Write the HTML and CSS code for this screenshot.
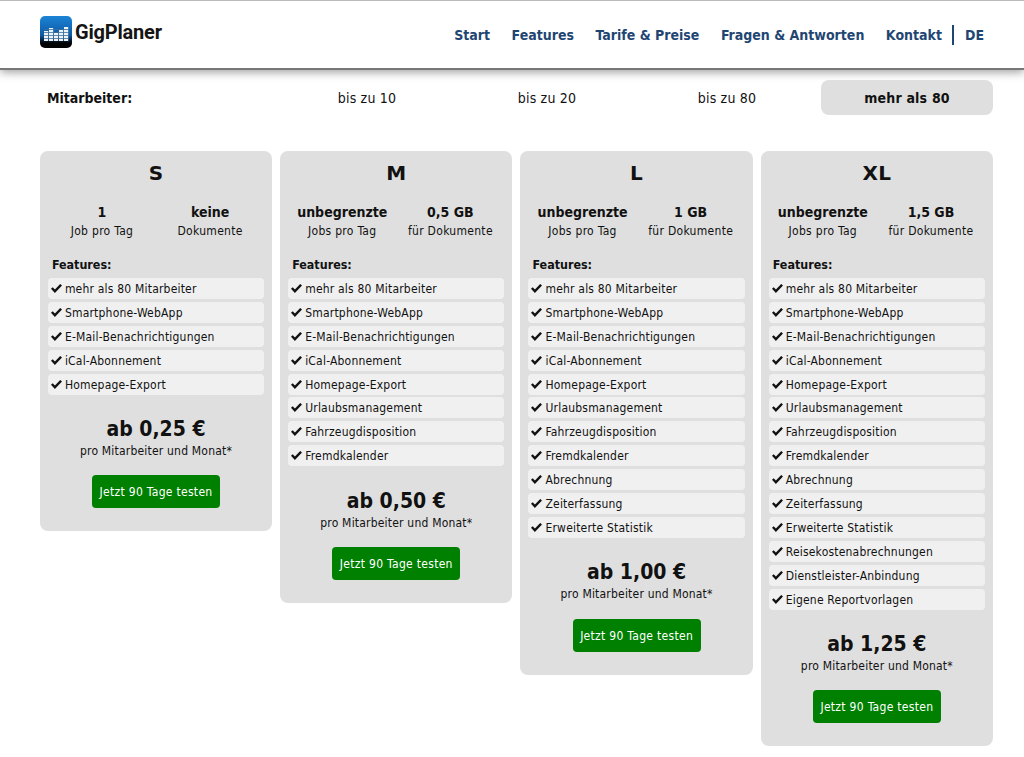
FILE: index.html
```html
<!DOCTYPE html>
<html lang="de">
<head>
<meta charset="utf-8">
<title>GigPlaner</title>
<link rel="stylesheet" href="styles.css">
</head>
<body>
<header class="topbar">
  <a class="brand" href="#">
    <svg class="brand-icon" width="32" height="32" viewBox="0 0 32 32" aria-hidden="true">
      <defs>
        <linearGradient id="lg" x1="0" y1="0" x2="0" y2="1">
          <stop offset="0" stop-color="#1c84d6"/><stop offset=".6" stop-color="#0c5aa6"/><stop offset=".78" stop-color="#03172c"/><stop offset=".86" stop-color="#000"/>
        </linearGradient>
      </defs>
      <rect width="32" height="32" rx="5" fill="url(#lg)"/>
      <g fill="#eef3f8">
        <rect x="4" y="15" width="4.2" height="10"/><rect x="9" y="12" width="4.2" height="13"/><rect x="14" y="17" width="4.2" height="8"/><rect x="19" y="14" width="4.2" height="11"/><rect x="24" y="11" width="4.2" height="14"/>
      </g>
      <g fill="#3f6f9c"><rect x="4" y="13" width="25" height=".8"/><rect x="4" y="16" width="25" height=".8"/><rect x="4" y="19" width="25" height=".8"/><rect x="4" y="22" width="25" height=".8"/></g>
    </svg>
    <span class="brand-name">GigPlaner</span>
  </a>
  <nav class="nav">
    <a href="#">Start</a>
    <a href="#">Features</a>
    <a href="#">Tarife &amp; Preise</a>
    <a href="#">Fragen &amp; Antworten</a>
    <a href="#">Kontakt</a>
    <a class="lang" href="#">DE</a>
  </nav>
</header>
<main class="content">
  <div class="tabs">
    <div class="tabs-label">Mitarbeiter:</div>
    <div class="tab">bis zu 10</div>
    <div class="tab">bis zu 20</div>
    <div class="tab">bis zu 80</div>
    <div class="tab active">mehr als 80</div>
  </div>
  <div class="plans">
    <section class="plan">
      <h2>S</h2>
      <div class="stats">
        <div><b>1</b><span>Job pro Tag</span></div>
        <div><b>keine</b><span>Dokumente</span></div>
      </div>
      <h3>Features:</h3>
      <ul>
        <li>mehr als 80 Mitarbeiter</li><li>Smartphone-WebApp</li><li>E-Mail-Benachrichtigungen</li><li>iCal-Abonnement</li><li>Homepage-Export</li>
      </ul>
      <div class="price">ab 0,25 €</div>
      <div class="per">pro Mitarbeiter und Monat*</div>
      <a class="cta" href="#">Jetzt 90 Tage testen</a>
    </section>
    <section class="plan">
      <h2>M</h2>
      <div class="stats">
        <div><b>unbegrenzte</b><span>Jobs pro Tag</span></div>
        <div><b>0,5 GB</b><span>für Dokumente</span></div>
      </div>
      <h3>Features:</h3>
      <ul>
        <li>mehr als 80 Mitarbeiter</li><li>Smartphone-WebApp</li><li>E-Mail-Benachrichtigungen</li><li>iCal-Abonnement</li><li>Homepage-Export</li><li>Urlaubsmanagement</li><li>Fahrzeugdisposition</li><li>Fremdkalender</li>
      </ul>
      <div class="price">ab 0,50 €</div>
      <div class="per">pro Mitarbeiter und Monat*</div>
      <a class="cta" href="#">Jetzt 90 Tage testen</a>
    </section>
    <section class="plan">
      <h2>L</h2>
      <div class="stats">
        <div><b>unbegrenzte</b><span>Jobs pro Tag</span></div>
        <div><b>1 GB</b><span>für Dokumente</span></div>
      </div>
      <h3>Features:</h3>
      <ul>
        <li>mehr als 80 Mitarbeiter</li><li>Smartphone-WebApp</li><li>E-Mail-Benachrichtigungen</li><li>iCal-Abonnement</li><li>Homepage-Export</li><li>Urlaubsmanagement</li><li>Fahrzeugdisposition</li><li>Fremdkalender</li><li>Abrechnung</li><li>Zeiterfassung</li><li>Erweiterte Statistik</li>
      </ul>
      <div class="price">ab 1,00 €</div>
      <div class="per">pro Mitarbeiter und Monat*</div>
      <a class="cta" href="#">Jetzt 90 Tage testen</a>
    </section>
    <section class="plan">
      <h2>XL</h2>
      <div class="stats">
        <div><b>unbegrenzte</b><span>Jobs pro Tag</span></div>
        <div><b>1,5 GB</b><span>für Dokumente</span></div>
      </div>
      <h3>Features:</h3>
      <ul>
        <li>mehr als 80 Mitarbeiter</li><li>Smartphone-WebApp</li><li>E-Mail-Benachrichtigungen</li><li>iCal-Abonnement</li><li>Homepage-Export</li><li>Urlaubsmanagement</li><li>Fahrzeugdisposition</li><li>Fremdkalender</li><li>Abrechnung</li><li>Zeiterfassung</li><li>Erweiterte Statistik</li><li>Reisekostenabrechnungen</li><li>Dienstleister-Anbindung</li><li>Eigene Reportvorlagen</li>
      </ul>
      <div class="price">ab 1,25 €</div>
      <div class="per">pro Mitarbeiter und Monat*</div>
      <a class="cta" href="#">Jetzt 90 Tage testen</a>
    </section>
  </div>
</main>
</body>
</html>
```
FILE: styles.css
```css
* { box-sizing: border-box; }
html, body { margin: 0; padding: 0; }
body {
  background: #fff;
  color: #111;
  font-family: "DejaVu Sans", Verdana, sans-serif;
  font-stretch: condensed;
  font-size: 12px;
  letter-spacing: .2px;
  overflow-x: hidden;
}
a { text-decoration: none; color: inherit; }

.topbar {
  height: 70px;
  border-top: 1px solid #bbb;
  border-bottom: 2px solid #777;
  box-shadow: 0 2px 9px rgba(0,0,0,.4);
  background: #fff;
  display: flex;
  align-items: center;
  justify-content: space-between;
  padding: 0 40px;
}
.brand { display: flex; align-items: center; gap: 3px; margin-bottom: 5px; }
.brand-icon { display: block; }
.brand-name {
  font-family: Roboto, "Liberation Sans", sans-serif;
  font-stretch: normal;
  font-weight: 700;
  font-size: 20px;
  letter-spacing: -.2px;
  color: #151515;
}
.nav { display: flex; align-items: center; margin-top: 1px; color: #1f4673; font-weight: 700; font-size: 14px; letter-spacing: 0; }
.nav a { margin-left: 21.5px; }
.nav .lang { margin-left: 10px; padding-left: 11px; border-left: 2px solid #1f4673; line-height: 20px; }

.content { padding: 10px 31px 0 39.9px; }
.tabs { display: flex; gap: 8px; height: 35px; align-items: stretch; }
.tabs-label { flex: 1; font-weight: 700; font-size: 14px; letter-spacing: 0; padding-left: 7px; display: flex; align-items: center; }
.tab { width: 172px; display: flex; align-items: center; justify-content: center; font-size: 14px; border-radius: 8px; }
.tab.active { background: #dfdfdf; font-weight: 700; }

.plans { display: flex; gap: 8px; align-items: flex-start; margin-top: 36px; }
.plan {
  flex: 1;
  background: #dfdfdf;
  border-radius: 8px;
  padding: 9px 8px 23px;
  text-align: center;
}
.plan h2 { margin: 0; font-size: 20px; line-height: 26px; font-weight: 700; font-stretch: normal; }
.stats { display: flex; margin-top: 17px; }
.stats > div { flex: 1; }
.stats b { display: block; font-size: 14px; letter-spacing: 0; line-height: 19px; }
.stats span { display: block; line-height: 18px; letter-spacing: .3px; }
.plan h3 { margin: 16px 0 0; padding-left: 4px; text-align: left; font-size: 12.4px; letter-spacing: 0; line-height: 18px; font-weight: 700; }
.plan ul { list-style: none; margin: 4px 0 0; padding: 0; text-align: left; }
.plan li {
  height: 21px;
  line-height: 21px;
  margin-bottom: 2.9px;
  background: #f0f0f0;
  border-radius: 4px;
  padding: 1px 0 0 3px;
  white-space: nowrap;
}
.plan li::before {
  content: "";
  display: inline-block;
  width: 11px;
  height: 9px;
  margin-right: 3px;
  background: url("data:image/svg+xml,%3Csvg xmlns='http://www.w3.org/2000/svg' viewBox='0 0 11 9'%3E%3Cpath d='M0 4.8 1.7 3.2 3.9 5.6 9.2 0 11 1.6 3.9 9z' fill='%23111'/%3E%3C/svg%3E") no-repeat center / contain;
}
.price { margin-top: 21.4px; font-size: 21px; font-weight: 700; letter-spacing: 0; line-height: 26px; }
.per { line-height: 18px; }
.cta {
  display: block;
  width: 128px;
  height: 33px;
  line-height: 34px;
  margin: 15.3px auto 0;
  background: #008000;
  color: #fff;
  border-radius: 4px;
  letter-spacing: .3px;
}
```
